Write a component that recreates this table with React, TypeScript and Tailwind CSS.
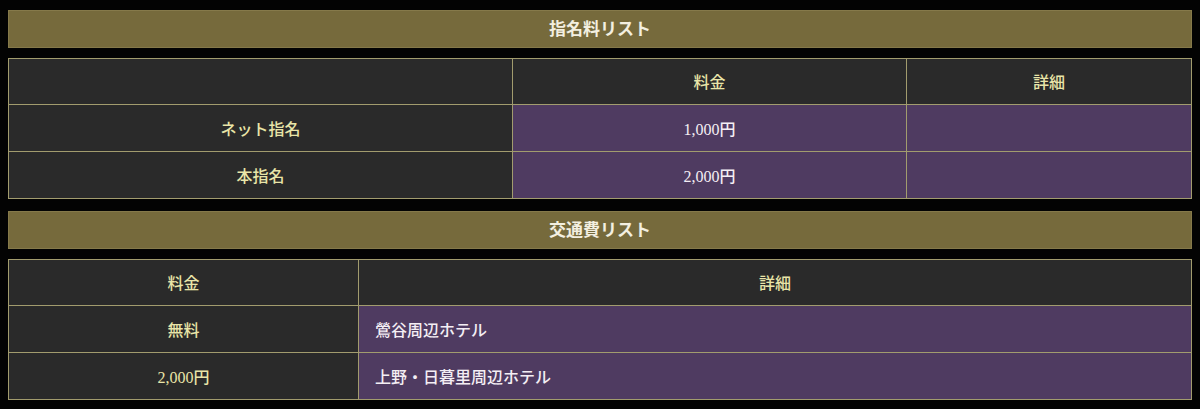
const font = { fontFamily: '"Liberation Serif", "Noto Sans CJK JP", serif' };

const nominations = [
  { name: "ネット指名", price: "1,000円", detail: "" },
  { name: "本指名", price: "2,000円", detail: "" },
];

const transport = [
  { price: "無料", detail: "鶯谷周辺ホテル" },
  { price: "2,000円", detail: "上野・日暮里周辺ホテル" },
];

function Heading({ children }: { children: React.ReactNode }) {
  return (
    <div className="h-[38px] flex items-center justify-center bg-[#766a3c] border border-[#85794a] text-[#f3efe0] text-[17px] font-bold mb-[10px] pt-[2px]">
      {children}
    </div>
  );
}

export default function App() {
  return (
    <main className="min-h-screen bg-[#030303] px-2 pt-[10px]" style={font}>

      {/* NOMINATION */}
      <section>
        <Heading>指名料リスト</Heading>

        <table className="w-full border-collapse table-fixed text-[16px] font-medium">
          <colgroup>
            <col className="w-[504px]" />
            <col className="w-[394px]" />
            <col />
          </colgroup>
          <thead>
            <tr className="h-[46px] bg-[#2a2a2a] text-[#e9e5a8]">
              <th className="border border-[#a29c6e] font-medium pt-[3px]"></th>
              <th className="border border-[#a29c6e] font-medium pt-[3px]">料金</th>
              <th className="border border-[#a29c6e] font-medium pt-[3px]">詳細</th>
            </tr>
          </thead>
          <tbody>
            {nominations.map((row) => (
              <tr key={row.name} className="h-[47px]">
                <td className="border border-[#a29c6e] bg-[#2a2a2a] text-[#e9e5a8] text-center pt-[3px]">
                  {row.name}
                </td>
                <td className="border border-[#a29c6e] bg-[#4f3b61] text-[#f4eef4] text-center pt-[3px]">
                  {row.price}
                </td>
                <td className="border border-[#a29c6e] bg-[#4f3b61] text-[#f4eef4] text-center pt-[3px]">
                  {row.detail}
                </td>
              </tr>
            ))}
          </tbody>
        </table>
      </section>

      {/* TRANSPORT */}
      <section className="mt-[12px]">
        <Heading>交通費リスト</Heading>

        <table className="w-full border-collapse table-fixed text-[16px] font-medium">
          <colgroup>
            <col className="w-[350px]" />
            <col />
          </colgroup>
          <thead>
            <tr className="h-[46px] bg-[#2a2a2a] text-[#e9e5a8]">
              <th className="border border-[#a29c6e] font-medium pt-[3px]">料金</th>
              <th className="border border-[#a29c6e] font-medium pt-[3px]">詳細</th>
            </tr>
          </thead>
          <tbody>
            {transport.map((row) => (
              <tr key={row.detail} className="h-[47px]">
                <td className="border border-[#a29c6e] bg-[#2a2a2a] text-[#e9e5a8] text-center pt-[3px]">
                  {row.price}
                </td>
                <td className="border border-[#a29c6e] bg-[#4f3b61] text-[#f4eef4] text-left pl-4 pt-[3px]">
                  {row.detail}
                </td>
              </tr>
            ))}
          </tbody>
        </table>
      </section>

    </main>
  );
}
